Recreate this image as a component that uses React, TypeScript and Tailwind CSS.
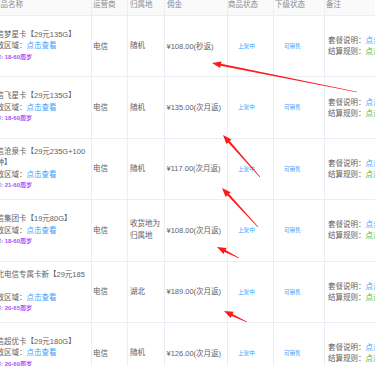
import React from 'react';

type Row = { name: string; age: string; area: string; fee: string };

const rows: Row[] = [
  { name: '电信梦星卡【29元135G】', age: '18-60', area: '随机', fee: '¥108.00(秒返)' },
  { name: '电信飞星卡【29元135G】', age: '18-60', area: '随机', fee: '¥135.00(次月返)' },
  { name: '电信沧泉卡【29元235G+100分钟】', age: '21-60', area: '随机', fee: '¥117.00(次月返)' },
  { name: '电信集团卡【19元80G】', age: '18-60', area: '收货地为归属地', fee: '¥108.00(次月返)' },
  { name: '湖北电信专属卡新【29元185G】', age: '20-65', area: '湖北', fee: '¥189.00(次月返)' },
  { name: '电信超优卡【29元180G】', age: '20-60', area: '随机', fee: '¥126.00(次月返)' },
];

function Arrow({ x1, y1, x2, y2 }: { x1: number; y1: number; x2: number; y2: number }) {
  const dx = x2 - x1;
  const dy = y2 - y1;
  const len = Math.hypot(dx, dy);
  const ux = dx / len;
  const uy = dy / len;
  const nx = -uy;
  const ny = ux;
  const head = 9;
  const hw = 3.4;
  const sw = 1.1;
  const tw = 0.3;
  const bx = x2 - ux * head;
  const by = y2 - uy * head;
  const pts: [number, number][] = [
    [x1 + nx * tw, y1 + ny * tw],
    [bx + nx * sw, by + ny * sw],
    [bx + nx * hw, by + ny * hw],
    [x2, y2],
    [bx - nx * hw, by - ny * hw],
    [bx - nx * sw, by - ny * sw],
    [x1 - nx * tw, y1 - ny * tw],
  ];
  return <polygon points={pts.map((p) => p.join(',')).join(' ')} fill="#ff1a1a" />;
}

export default function App() {
  return (
    <div className="relative w-[375px] h-[366px] overflow-hidden bg-white font-['Liberation_Sans','Noto_Sans_CJK_SC',sans-serif] text-[7.5px] text-[#606266]">
      {/* header */}
      <div className="flex h-[16px] border-b border-[#ebeef5] bg-[#fafafa] text-[#888b92] leading-[10px]">
        <div className="w-[92px] shrink-0 border-r border-[#ebeef5] overflow-hidden">
          <div className="-ml-[7px] whitespace-nowrap">商品名称</div>
        </div>
        <div className="w-[36px] shrink-0 border-r border-[#ebeef5] pl-[1px]">运营商</div>
        <div className="w-[37px] shrink-0 border-r border-[#ebeef5] pl-[2px]">归属地</div>
        <div className="w-[63px] shrink-0 border-r border-[#ebeef5] pl-[2px]">佣金</div>
        <div className="w-[46px] shrink-0 border-r border-[#ebeef5]">商品状态</div>
        <div className="w-[51px] shrink-0 border-r border-[#ebeef5] pl-[1px]">下级状态</div>
        <div className="flex-1 pl-[1px]">备注</div>
      </div>

      {rows.map((r, i) => (
        <div key={i} className="flex h-[61.4px] border-b border-[#ebeef5]">
          <div className="w-[92px] shrink-0 border-r border-[#ebeef5] overflow-hidden flex items-center">
            <div className="-ml-[11px] w-[99px] shrink-0 leading-[11.5px] break-all">
              <div>{r.name}</div>
              <div>
                投放区域：<span className="text-[#409eff]">点击查看</span>
              </div>
              <div className="text-[6px] text-[#a855f7] font-semibold whitespace-nowrap">
                年龄: {r.age}周岁
              </div>
            </div>
          </div>
          <div className="w-[36px] shrink-0 border-r border-[#ebeef5] pl-[1px] flex items-center">电信</div>
          <div className="w-[37px] shrink-0 border-r border-[#ebeef5] pl-[2px] flex items-center leading-[12px]">
            {r.area}
          </div>
          <div className="w-[63px] shrink-0 border-r border-[#ebeef5] pl-[1.5px] flex items-center whitespace-nowrap">
            {r.fee}
          </div>
          <div className="w-[46px] shrink-0 border-r border-[#ebeef5] pl-[10px] flex items-center text-[5.6px] text-[#409eff]">
            上架中
          </div>
          <div className="w-[51px] shrink-0 border-r border-[#ebeef5] pl-[10px] flex items-center text-[5.6px] text-[#409eff]">
            可销售
          </div>
          <div className="flex-1 pl-[3px] flex flex-col justify-center leading-[11px] whitespace-nowrap overflow-hidden">
            <div>
              套餐说明：<span className="text-[#409eff]">点击查看</span>
            </div>
            <div>
              结算规则：<span className="text-[#52b52a]">点击查看</span>
            </div>
          </div>
        </div>
      ))}

      <svg className="absolute inset-0 pointer-events-none" width="375" height="366" viewBox="0 0 375 366">
        <Arrow x1={357} y1={92} x2={212} y2={63} />
        <Arrow x1={260} y1={177} x2={223} y2={135} />
        <Arrow x1={258} y1={227} x2={222} y2={188} />
        <Arrow x1={239} y1={258} x2={217} y2={247} />
        <Arrow x1={247} y1={322} x2={224} y2={311} />
      </svg>
    </div>
  );
}
